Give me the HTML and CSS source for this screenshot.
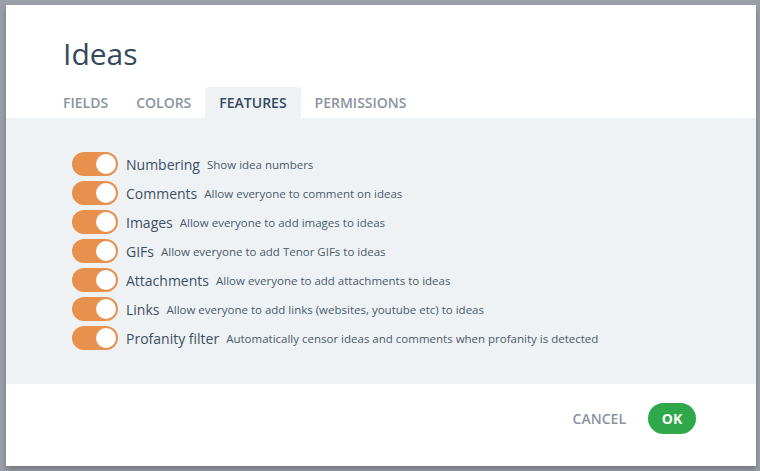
FILE: index.html
```html
<!DOCTYPE html>
<html>
<head>
<meta charset="utf-8">
<link rel="stylesheet" href="styles.css">
</head>
<body>
<div class="dialog">
  <div class="header">
    <h1 class="title">Ideas</h1>
    <div class="tabs">
      <div class="tab">FIELDS</div>
      <div class="tab">COLORS</div>
      <div class="tab active">FEATURES</div>
      <div class="tab">PERMISSIONS</div>
    </div>
  </div>
  <div class="content">
    <div class="row"><span class="toggle"><span class="knob"></span></span><span class="label">Numbering</span><span class="desc">Show idea numbers</span></div>
    <div class="row"><span class="toggle"><span class="knob"></span></span><span class="label">Comments</span><span class="desc">Allow everyone to comment on ideas</span></div>
    <div class="row"><span class="toggle"><span class="knob"></span></span><span class="label">Images</span><span class="desc">Allow everyone to add images to ideas</span></div>
    <div class="row"><span class="toggle"><span class="knob"></span></span><span class="label">GIFs</span><span class="desc">Allow everyone to add Tenor GIFs to ideas</span></div>
    <div class="row"><span class="toggle"><span class="knob"></span></span><span class="label">Attachments</span><span class="desc">Allow everyone to add attachments to ideas</span></div>
    <div class="row"><span class="toggle"><span class="knob"></span></span><span class="label">Links</span><span class="desc">Allow everyone to add links (websites, youtube etc) to ideas</span></div>
    <div class="row"><span class="toggle"><span class="knob"></span></span><span class="label">Profanity filter</span><span class="desc">Automatically censor ideas and comments when profanity is detected</span></div>
  </div>
  <div class="footer">
    <button class="btn-cancel">CANCEL</button>
    <button class="btn-ok">OK</button>
  </div>
</div>
</body>
</html>
```
FILE: styles.css
```css
html, body {
  margin: 0;
  height: 100%;
}
body {
  background: #9ba0a8;
  padding: 5px 4px 5px 6px;
  box-sizing: border-box;
  font-family: "Open Sans", "Noto Sans", sans-serif;
  overflow: hidden;
}
.dialog {
  background: #ffffff;
  height: 461px;
  display: flex;
  flex-direction: column;
  box-shadow: 0 4px 6px rgba(0, 0, 0, 0.25);
}
.header {
  padding: 0 0 0 57px;
}
.title {
  margin: 0;
  padding-top: 28px;
  font-size: 30px;
  font-weight: 400;
  line-height: 42px;
  color: #34495e;
  height: 54px;
}
.tabs {
  display: flex;
  height: 31px;
  margin-left: -14px;
}
.tab {
  padding: 0 14px;
  font-size: 14px;
  font-weight: 600;
  color: #8a939e;
  line-height: 32px;
  border-radius: 4px 4px 0 0;
}
.tab.active {
  background: #eff2f5;
  color: #34495e;
}
.content {
  background: #eff2f5;
  height: 266px;
  box-sizing: border-box;
  padding: 34px 0 0 66px;
  display: flex;
  flex-direction: column;
  gap: 5px;
}
.row {
  display: flex;
  align-items: center;
  height: 24px;
}
.toggle {
  width: 46px;
  height: 24px;
  border-radius: 12px;
  background: #e8914f;
  display: flex;
  align-items: center;
  justify-content: flex-end;
  padding-right: 2px;
  box-sizing: border-box;
  margin-right: 8px;
}
.knob {
  width: 20px;
  height: 20px;
  border-radius: 50%;
  background: #ffffff;
}
.label {
  font-size: 14px;
  color: #3d4f63;
  margin-right: 7px;
}
.desc {
  font-size: 11.5px;
  color: #4a5a6a;
}
.footer {
  flex: 1;
  display: flex;
  align-items: flex-start;
  justify-content: flex-end;
  padding: 19px 60px 0 0;
}
.btn-cancel {
  border: none;
  background: none;
  font-family: inherit;
  font-size: 14px;
  font-weight: 600;
  color: #8a939e;
  padding: 0;
  height: 31px;
  margin-right: 22px;
}
.btn-ok {
  border: none;
  background: #2ea84a;
  color: #ffffff;
  font-family: inherit;
  font-size: 14px;
  font-weight: 700;
  width: 48px;
  height: 31px;
  border-radius: 16px;
  padding: 0;
}
```
